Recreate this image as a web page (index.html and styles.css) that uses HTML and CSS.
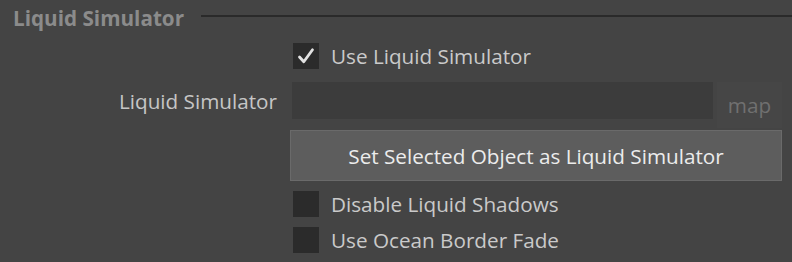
FILE: index.html
```html
<!DOCTYPE html>
<html>
<head>
<meta charset="utf-8">
<link rel="stylesheet" href="styles.css">
</head>
<body>
<div class="panel">
  <div class="header">
    <span class="title">Liquid Simulator</span>
    <span class="rule"></span>
  </div>
  <div class="form">
    <div class="row check-row first">
      <span class="box checked">
        <svg viewBox="0 0 26 26" width="26" height="26"><path d="M6.5 14 L10.8 18.8 L19.5 6.8" fill="none" stroke="#e2e2e2" stroke-width="2.8" stroke-linecap="round" stroke-linejoin="round"/></svg>
      </span>
      <span class="check-label">Use Liquid Simulator</span>
    </div>
    <div class="row field-row">
      <span class="label">Liquid Simulator</span>
      <span class="field"></span>
      <span class="map">map</span>
    </div>
    <div class="row button-row">
      <button class="btn">Set Selected Object as Liquid Simulator</button>
    </div>
    <div class="row check-row">
      <span class="box"></span>
      <span class="check-label">Disable Liquid Shadows</span>
    </div>
    <div class="row check-row tight">
      <span class="box"></span>
      <span class="check-label">Use Ocean Border Fade</span>
    </div>
  </div>
</div>
</body>
</html>
```
FILE: styles.css
```css
* { box-sizing: border-box; }
html, body { margin: 0; padding: 0; }
body {
  background: #444444;
  width: 792px;
  height: 262px;
  overflow: hidden;
  font-family: "Open Sans", "Noto Sans", sans-serif;
  color: #c9c9c9;
}
.panel { display: flex; flex-direction: column; }
.header {
  display: flex;
  align-items: center;
  height: 35px;
  padding-left: 13px;
}
.title {
  font-weight: 700;
  font-size: 20.7px;
  color: #8b8b8b;
}
.rule {
  flex: 1;
  height: 2px;
  background: #2a2a2a;
  margin-left: 17px;
  margin-top: -3px;
}
.form { display: flex; flex-direction: column; padding-left: 293px; }
.row { display: flex; align-items: center; }
.check-row.first { margin-top: 8px; }
.check-row { height: 26px; margin-top: 10px; }
.check-row.tight { margin-top: 10px; }
.box {
  width: 26px;
  height: 26px;
  background: #2b2b2b;
  display: flex;
}
.check-label {
  margin-left: 12px;
  font-size: 20.7px;
  color: #cacaca;
}
.field-row {
  margin-top: 13px;
  height: 37px;
  position: relative;
}
.label {
  position: absolute;
  right: 100%;
  margin-right: 16px;
  font-size: 20.7px;
  color: #c6c6c6;
  white-space: nowrap;
}
.field {
  width: 421px;
  height: 37px;
  background: #3c3c3c;
  margin-left: -1px;
}
.map {
  width: 65px;
  height: 46px;
  margin-left: 4px;
  display: flex;
  align-items: center;
  justify-content: center;
  font-size: 20.7px;
  color: #707070;
  background: #464646;
  margin-top: 9px;
}
.button-row { margin-top: 11px; }
.btn {
  width: 492px;
  height: 51px;
  margin-left: -3px;
  background: #5d5d5d;
  border: 1px solid #6a6a6a;
  color: #ececec;
  font-family: "Open Sans", "Noto Sans", sans-serif;
  font-size: 20.7px;
  padding: 0;
}
```
